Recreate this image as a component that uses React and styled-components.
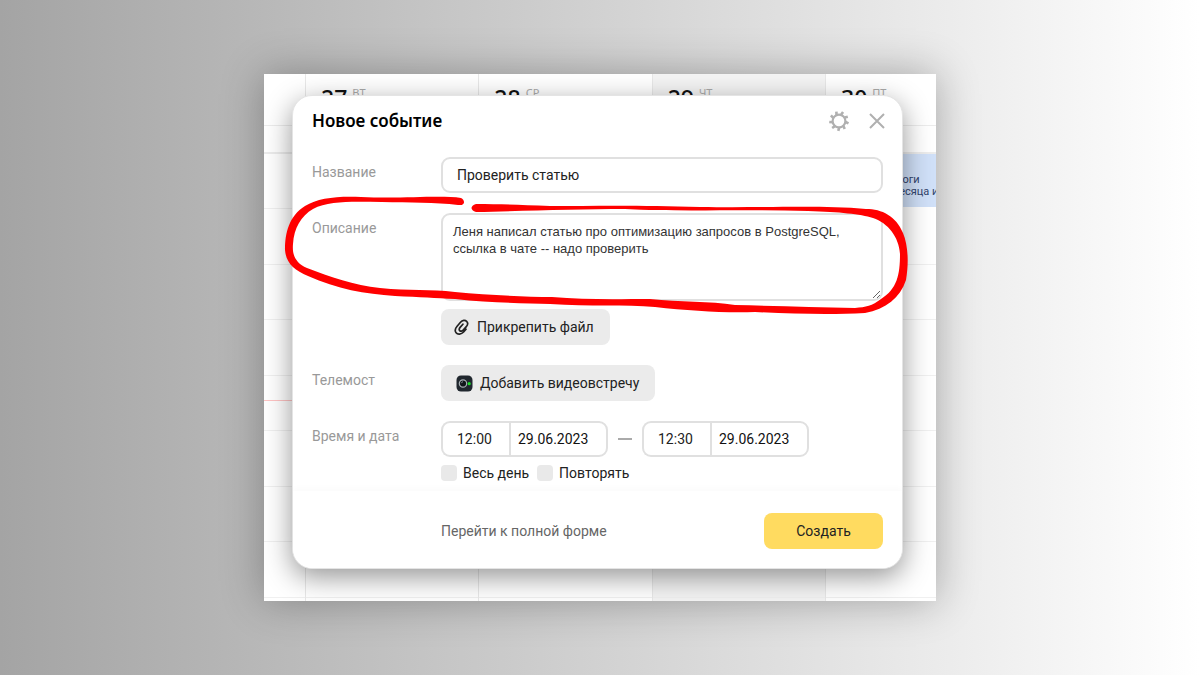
import React, { useState } from 'react';
import styled, { createGlobalStyle } from 'styled-components';

const GlobalStyle = createGlobalStyle`
  * {
    box-sizing: border-box;
  }

  body {
    margin: 0;
    font-family: Roboto, 'Noto Sans', sans-serif;
  }
`;

const line = '#ececec';
const border = '#e0e0e0';

const Page = styled.main`
  display: grid;
  place-items: center;
  min-height: 100vh;
  padding: 32px 0;
  background: linear-gradient(90deg, #a4a4a4 0%, #ffffff 100%);
`;

const Board = styled.div`
  display: grid;
  width: 56%;
  min-width: 640px;
  overflow: hidden;
  background: white;
  box-shadow: 0 0 40px rgba(0, 0, 0, 0.3);

  > * {
    grid-area: 1 / 1;
  }
`;

const Calendar = styled.div`
  display: grid;
  grid-template-columns: 41px repeat(3, 1fr) 111px;
`;

const Day = styled.section`
  display: flex;
  flex-direction: column;
  min-width: 0;
  border-left: ${props => (props.$first ? 'none' : '1px solid #e8e8e8')};
  background: ${props => (props.$today ? '#f4f4f4' : 'white')};
`;

const DayHead = styled.header`
  display: flex;
  gap: 5px;
  height: 52px;
  padding: 12px 15px;
  border-bottom: 1px solid ${line};
`;

const DayNumber = styled.span`
  color: #111;
  font-family: 'Noto Sans', sans-serif;
  font-size: 23px;
  font-weight: 500;
  line-height: 24px;
`;

const DayName = styled.span`
  color: #aaa;
  font-family: 'Noto Sans', sans-serif;
  font-size: 11px;
  line-height: 14px;
`;

const AllDay = styled.div`
  height: 28px;
  border-bottom: 2px solid ${line};
`;

const Hour = styled.div`
  height: 56px;
  border-bottom: 1px solid #f0f0f0;

  &:nth-child(odd) {
    height: 55px;
  }
`;

const NowLine = styled.div`
  height: 1px;
  margin-top: 24px;
  background: #ffc4c4;
`;

const Event = styled.div`
  height: 55px;
  padding: 20px 0 0 65px;
  overflow: hidden;
  border-bottom: 2px solid white;
  background: #d0e0f8;
  color: #31436b;
  font-size: 11px;
  line-height: 12px;
  white-space: nowrap;
`;

const Dialog = styled.form`
  display: flex;
  flex-direction: column;
  z-index: 1;
  margin: 21px 33px 32px 28px;
  border: 1px solid #e4e4e4;
  border-radius: 20px;
  background: white;
  box-shadow: 0 8px 28px rgba(0, 0, 0, 0.42);
`;

const DialogHead = styled.header`
  display: flex;
  align-items: center;
  gap: 16px;
  padding: 13px 14px 0 19px;
`;

const Title = styled.h1`
  flex: 1;
  margin: 0;
  font-family: 'Noto Sans', sans-serif;
  font-size: 17px;
  font-weight: 600;
  line-height: 24px;
`;

const IconButton = styled.button`
  display: flex;
  padding: 0;
  border: none;
  background: none;
  color: #b0b0b0;
  cursor: pointer;
`;

const Fields = styled.div`
  display: flex;
  flex-direction: column;
  gap: 20px;
  padding: 24px 19px 10px;
`;

const Field = styled.div`
  display: grid;
  grid-template-columns: 129px 1fr;
`;

const Label = styled.label`
  padding-top: 5px;
  color: #999;
  font-size: 14px;
  line-height: 20px;
`;

const TextInput = styled.input`
  width: 100%;
  height: 36px;
  padding: 0 14px;
  border: 2px solid ${border};
  border-radius: 9px;
  background: white;
  color: #222;
  font: 14px Roboto, sans-serif;
`;

const TextArea = styled.textarea`
  display: block;
  width: 100%;
  height: 88px;
  padding: 8px 10px;
  border: 2px solid ${border};
  border-radius: 9px;
  color: #333;
  font: 13px/17px 'Liberation Sans', sans-serif;
  resize: vertical;
`;

const Stack = styled.div`
  display: flex;
  flex-direction: column;
  align-items: flex-start;
  gap: 8px;
`;

const GrayButton = styled.button`
  display: flex;
  align-items: center;
  gap: 7px;
  height: 36px;
  padding: 0 16px 0 ${props => (props.$inset ? '15px' : '12px')};
  border: none;
  border-radius: 8px;
  background: #ebebeb;
  color: #222;
  font: 14px Roboto, sans-serif;
  cursor: pointer;
`;

const Times = styled.div`
  display: flex;
  align-items: center;
  gap: 10px;
`;

const Dash = styled.span`
  width: 14px;
  border-top: 2px solid #aaa;
`;

const TimePair = styled.div`
  display: flex;
`;

const TimeInput = styled(TextInput)`
  width: 68px;
  border-right: none;
  border-radius: 9px 0 0 9px;
`;

const DateInput = styled(TextInput)`
  width: 99px;
  padding: 0 7px;
  border-radius: 0 9px 9px 0;
  color: #111;
`;

const Checks = styled.div`
  display: flex;
  gap: 8px;
`;

const Check = styled.label`
  display: flex;
  align-items: center;
  gap: 6px;
  color: #222;
  font-size: 14px;
  line-height: 16px;
`;

const Checkbox = styled.input`
  appearance: none;
  width: 16px;
  height: 16px;
  margin: 0;
  border-radius: 4px;
  background: #e9e9e9;

  &:checked {
    background: #ffdb60;
  }
`;

const DialogFoot = styled.footer`
  display: flex;
  align-items: center;
  justify-content: space-between;
  padding: 22px 19px 19px 148px;
  border-radius: 0 0 20px 20px;
  background: white;
  box-shadow: 0 -3px 6px rgba(0, 0, 0, 0.02);
`;

const FullFormLink = styled.a`
  color: #666;
  font-size: 14px;
  line-height: 20px;
  text-decoration: none;
`;

const CreateButton = styled.button`
  width: 119px;
  height: 36px;
  border: none;
  border-radius: 8px;
  background: #ffdb60;
  color: #222;
  font: 14px Roboto, sans-serif;
  cursor: pointer;
`;

const Marker = styled.svg`
  z-index: 2;
  justify-self: center;
  width: 672px;
  height: 527px;
  pointer-events: none;
`;

const GearIcon = () => (
  <svg width="22" height="22" viewBox="0 0 22 22" fill="none" stroke="currentColor">
    <circle cx="11" cy="11" r="6.4" strokeWidth="2.2" />
    {Array.from({ length: 9 }).map((_, i) => (
      <path key={i} d="M10.6 4.4L11.4 1.2" strokeWidth="2.6" transform={`rotate(${i * 40 - 18} 11 11)`} />
    ))}
  </svg>
);

const CloseIcon = () => (
  <svg width="22" height="22" viewBox="0 0 22 22" fill="none" stroke="currentColor" strokeWidth="2">
    <path d="M4 4l14 14M18 4L4 18" />
  </svg>
);

const ClipIcon = () => (
  <svg width="17" height="17" viewBox="0 0 17 17" fill="none" stroke="#222" strokeWidth="1.7" strokeLinecap="round">
    <path d="M13 10.2 10.6 13c-2.3 2.5-6 2.7-7.5.8-1.4-1.8-.8-4.4 1-6.5L7.5 3.3C9.4 1 12.2.9 13.6 2.3c1.5 1.5 1.1 3.7-.3 5.3l-2.9 3.3c-1.2 1.4-2.9 1.6-3.7.7-.8-.9-.4-2.2.4-3.2l2.8-3.2" />
  </svg>
);

const CameraIcon = () => (
  <svg width="17" height="17" viewBox="0 0 17 17">
    <rect x="0.5" y="0.5" width="16" height="16" rx="4.5" fill="#20272e" />
    <circle cx="7" cy="8.5" r="3.7" fill="#11161a" stroke="#a9b1b5" strokeWidth="1.2" />
    <path d="M5.3 8.2a2 2 0 0 1 1.7-1.5" fill="none" stroke="#7d878c" />
    <circle cx="13.2" cy="8.7" r="1.6" fill="#18dc28" />
  </svg>
);

const days = [
  { number: '27', name: 'ВТ' },
  { number: '28', name: 'СР' },
  { number: '29', name: 'ЧТ', today: true },
  { number: '30', name: 'ПТ', event: true },
];

const Hours = ({ now, event }) => (
  <>
    {event ? <Event>итоги<br />месяца и</Event> : <Hour />}
    <Hour />
    <Hour />
    <Hour />
    <Hour>{now && <NowLine />}</Hour>
    <Hour />
    <Hour />
    <Hour />
  </>
);

export default function App() {
  const [title, setTitle] = useState('Проверить статью');
  const [text, setText] = useState(
    'Леня написал статью про оптимизацию запросов в PostgreSQL, ссылка в чате -- надо проверить'
  );

  return (
    <Page>
      <GlobalStyle />
      <Board>
        <Calendar>
          <Day $first>
            <DayHead />
            <AllDay />
            <Hours now />
          </Day>
          {days.map(day => (
            <Day key={day.number} $today={day.today}>
              <DayHead>
                <DayNumber>{day.number}</DayNumber>
                <DayName>{day.name}</DayName>
              </DayHead>
              <AllDay />
              <Hours event={day.event} />
            </Day>
          ))}
        </Calendar>
        <Dialog onSubmit={e => e.preventDefault()}>
          <DialogHead>
            <Title>Новое событие</Title>
            <IconButton type="button" aria-label="Настройки"><GearIcon /></IconButton>
            <IconButton type="button" aria-label="Закрыть"><CloseIcon /></IconButton>
          </DialogHead>
          <Fields>
            <Field>
              <Label htmlFor="title">Название</Label>
              <TextInput id="title" value={title} onChange={e => setTitle(e.target.value)} />
            </Field>
            <Field>
              <Label htmlFor="text">Описание</Label>
              <Stack>
                <TextArea id="text" spellCheck={false} value={text} onChange={e => setText(e.target.value)} />
                <GrayButton type="button"><ClipIcon />Прикрепить файл</GrayButton>
              </Stack>
            </Field>
            <Field>
              <Label htmlFor="video">Телемост</Label>
              <Stack>
                <GrayButton id="video" type="button" $inset><CameraIcon />Добавить видеовстречу</GrayButton>
              </Stack>
            </Field>
            <Field>
              <Label htmlFor="start">Время и дата</Label>
              <Stack>
                <Times>
                  <TimePair>
                    <TimeInput id="start" defaultValue="12:00" />
                    <DateInput aria-label="Дата начала" defaultValue="29.06.2023" />
                  </TimePair>
                  <Dash />
                  <TimePair>
                    <TimeInput aria-label="Время окончания" defaultValue="12:30" />
                    <DateInput aria-label="Дата окончания" defaultValue="29.06.2023" />
                  </TimePair>
                </Times>
                <Checks>
                  <Check><Checkbox type="checkbox" />Весь день</Check>
                  <Check><Checkbox type="checkbox" />Повторять</Check>
                </Checks>
              </Stack>
            </Field>
          </Fields>
          <DialogFoot>
            <FullFormLink href="#full">Перейти к полной форме</FullFormLink>
            <CreateButton type="submit">Создать</CreateButton>
          </DialogFoot>
        </Dialog>
        <Marker viewBox="264 74 672 527" fill="#ff0000" aria-hidden="true">
          <path d="M461 198C440 195 400 199 361 197C337 196 318 198 305 206C289 216 285 233 285 250C286 263 294 270 308 276C337 289 365 294 395 296C421 297 435 298 455 299C490 303 525 303 550 304C590 307 625 304 655 307C690 311 725 313 755 312C795 314 832 315 865 313C886 309 900 298 906 280C909 262 908 245 903 233C896 216 882 209 866 209C820 205 770 208 700 207C640 205 590 206 550 206C520 205 500 204 476 204C470 206 470 210 476 212C520 211 580 209 625 209C680 212 740 209 808 211C840 212 860 214 873 218C888 223 899 237 900 254C900 275 897 289 881 299C872 306 866 307 855 308C816 307 775 306 735 305C710 301 680 302 650 299C620 299 585 300 552 297C524 297 488 295 455 292C430 289 410 291 380 288C354 285 330 277 307 268C295 263 292 254 293 244C294 228 301 216 313 209C330 200 356 202 382 202C410 203 435 202 458 205C466 206 465 200 461 198Z" />
        </Marker>
      </Board>
    </Page>
  );
}
